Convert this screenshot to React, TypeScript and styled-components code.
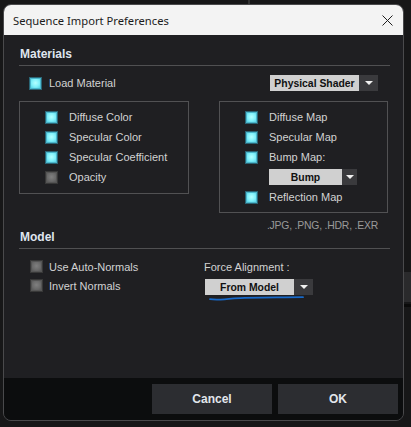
import React from "react";
import styled, { createGlobalStyle } from "styled-components";

const Global = createGlobalStyle`
  html, body { margin: 0; padding: 0; background: #161617; }
  * { box-sizing: border-box; }
`;

const Page = styled.div`
  width: 411px;
  height: 427px;
  padding: 4px 0 0 3px;
  background:
    linear-gradient(#2a2a2c, #2a2a2c) 404px 272px / 7px 30px no-repeat,
    linear-gradient(#0a0a0a, #0a0a0a) 404px 304px / 7px 3px no-repeat,
    linear-gradient(#333, #333) 248px 0 / 2px 4px no-repeat,
    #171718;
  overflow: hidden;
`;

const Window = styled.div`
  width: 401px;
  height: 417px;
  border: 1px solid #4a4a4c;
  border-radius: 8px;
  overflow: hidden;
  display: flex;
  flex-direction: column;
  background: #1f1f22;
  font-family: "Liberation Sans", Arial, sans-serif;
`;

const TitleBar = styled.div`
  height: 30px;
  flex: none;
  background: #f3f3f3;
  display: flex;
  align-items: center;
  justify-content: space-between;
  padding: 0 10px 0 9px;
  font-family: "Noto Sans", "Open Sans", sans-serif;
  font-size: 11.2px;
  color: #1b1b1b;
`;

const CloseX = styled.svg`
  width: 11px;
  height: 11px;
  margin-top: 1px;
`;

const Body = styled.div`
  flex: 1;
  padding: 0 13px 0 15px;
  display: flex;
  flex-direction: column;
`;

const Heading = styled.div<{ $mt: number }>`
  margin-top: ${(p) => p.$mt}px;
  height: 16px;
  line-height: 18px;
  font-size: 12px;
  font-weight: bold;
  color: #dfe5ee;
  padding-left: 1px;
`;

const Separator = styled.div`
  margin-top: 4px;
  height: 1px;
  background: #505052;
`;

const MaterialsGrid = styled.div`
  display: grid;
  grid-template-columns: 170px 169px;
  column-gap: 30px;
  align-items: start;
`;

const TopRow = styled.div<{ $right?: boolean }>`
  margin-top: 9px;
  height: 16px;
  display: flex;
  align-items: center;
  justify-content: ${(p) => (p.$right ? "flex-end" : "flex-start")};
  padding: ${(p) => (p.$right ? "0 10px 0 0" : "0 0 0 10px")};
`;

const GroupBox = styled.div<{ $h: number }>`
  margin-top: 10px;
  height: ${(p) => p.$h}px;
  border: 1px solid #515153;
  padding: 5px 0 0 25px;
  display: flex;
  flex-direction: column;
`;

const Row = styled.div<{ $h?: number }>`
  height: ${(p) => p.$h ?? 20}px;
  display: flex;
  align-items: center;
  gap: 11px;
`;

const Label = styled.span`
  font-size: 11px;
  color: #d2d2d2;
  white-space: nowrap;
`;

const Box = styled.span<{ $on: boolean }>`
  width: 13px;
  height: 13px;
  flex: none;
  border: 1px solid ${(p) => (p.$on ? "#2a6575" : "#383838")};
  background: ${(p) =>
    p.$on
      ? "radial-gradient(circle at 50% 45%, #b4ffff 0%, #82f2fb 45%, #3fc3dc 100%)"
      : "radial-gradient(circle at 50% 45%, #808080 0%, #6a6a6a 50%, #4c4c4c 100%)"};
  box-shadow: inset 0 0 0 1px ${(p) => (p.$on ? "#4bb7cc" : "#555")};
`;

const Select = styled.div<{ $w: number; $arrow: number }>`
  width: ${(p) => p.$w}px;
  height: 16px;
  display: grid;
  grid-template-columns: 1fr ${(p) => p.$arrow}px;
  flex: none;
`;

const SelectValue = styled.div`
  background: #d0d0d0;
  color: #111;
  font-size: 10.4px;
  font-weight: bold;
  display: flex;
  align-items: center;
  justify-content: center;
  white-space: nowrap;
`;

const SelectArrow = styled.div`
  background: #3a3a3d;
  display: flex;
  align-items: center;
  justify-content: center;
  &::after {
    content: "";
    border-left: 4px solid transparent;
    border-right: 4px solid transparent;
    border-top: 4px solid #f0f0f0;
  }
`;

const SubSelect = styled.div`
  margin: 2px 0 2px 24px;
`;

const Ext = styled.div`
  grid-column: 2;
  margin-top: 6px;
  height: 14px;
  line-height: 14px;
  text-align: right;
  padding-right: 10px;
  font-size: 10.4px;
  letter-spacing: -0.2px;
  color: #9a9a9a;
`;

const ModelGrid = styled.div`
  margin-top: 8px;
  display: grid;
  grid-template-columns: 185px 1fr;
`;

const ModelLeft = styled.div`
  display: flex;
  flex-direction: column;
  padding-left: 11px;
`;

const ModelLeftRow = styled(Row)`
  height: 19px;
  gap: 6px;
`;

const ModelRight = styled.div`
  display: flex;
  flex-direction: column;
`;

const ForceLabel = styled.div`
  height: 19px;
  display: flex;
  align-items: center;
  font-size: 11px;
  color: #d2d2d2;
`;

const Annotated = styled.div`
  position: relative;
  margin-top: 3px;
  margin-left: 1px;
  width: 108px;
`;

const Scribble = styled.svg`
  position: absolute;
  left: 3px;
  top: 15px;
  overflow: visible;
`;

const Footer = styled.div`
  height: 42px;
  flex: none;
  background: #0c0d0e;
  display: flex;
  align-items: center;
  justify-content: flex-end;
  gap: 6px;
  padding-right: 5px;
`;

const Button = styled.button`
  width: 120px;
  height: 30px;
  border: none;
  background: #2c2d31;
  color: #e2e6ec;
  font-family: "Liberation Sans", Arial, sans-serif;
  font-size: 12px;
  font-weight: bold;
  padding: 0;
`;

const Check = ({ on, label }: { on: boolean; label: string }) => (
  <Row>
    <Box $on={on} />
    <Label>{label}</Label>
  </Row>
);

const Dropdown = ({ w, arrow, value }: { w: number; arrow: number; value: string }) => (
  <Select $w={w} $arrow={arrow}>
    <SelectValue>{value}</SelectValue>
    <SelectArrow />
  </Select>
);

export default function App() {
  return (
    <Page>
      <Global />
      <Window>
        <TitleBar>
          <span>Sequence Import Preferences</span>
          <CloseX viewBox="0 0 11 11">
            <path d="M0.5 0.5 L10.5 10.5 M10.5 0.5 L0.5 10.5" stroke="#1f1f1f" strokeWidth="1" fill="none" />
          </CloseX>
        </TitleBar>
        <Body>
          <Heading $mt={10}>Materials</Heading>
          <Separator />
          <MaterialsGrid>
            <TopRow>
              <Row $h={16} style={{ gap: 7 }}>
                <Box $on />
                <Label>Load Material</Label>
              </Row>
            </TopRow>
            <TopRow $right>
              <Dropdown w={108} arrow={19} value="Physical Shader" />
            </TopRow>
            <GroupBox $h={93}>
              <Check on label="Diffuse Color" />
              <Check on label="Specular Color" />
              <Check on label="Specular Coefficient" />
              <Check on={false} label="Opacity" />
            </GroupBox>
            <GroupBox $h={112}>
              <Check on label="Diffuse Map" />
              <Check on label="Specular Map" />
              <Check on label="Bump Map:" />
              <SubSelect>
                <Dropdown w={88} arrow={15} value="Bump" />
              </SubSelect>
              <Check on label="Reflection Map" />
            </GroupBox>
            <Ext>.JPG, .PNG, .HDR, .EXR</Ext>
          </MaterialsGrid>
          <Heading $mt={-5}>Model</Heading>
          <Separator />
          <ModelGrid>
            <ModelLeft>
              <ModelLeftRow>
                <Box $on={false} />
                <Label>Use Auto-Normals</Label>
              </ModelLeftRow>
              <ModelLeftRow>
                <Box $on={false} />
                <Label>Invert Normals</Label>
              </ModelLeftRow>
            </ModelLeft>
            <ModelRight>
              <ForceLabel>Force Alignment :</ForceLabel>
              <Annotated>
                <Dropdown w={108} arrow={19} value="From Model" />
                <Scribble width="96" height="8" viewBox="0 0 96 8">
                  <path
                    d="M2 5.2 C 8 6.2, 16 5.6, 26 4.4 C 40 3.4, 60 3.6, 95 3.2"
                    stroke="#1769c9"
                    strokeWidth="1.8"
                    fill="none"
                    strokeLinecap="round"
                  />
                </Scribble>
              </Annotated>
            </ModelRight>
          </ModelGrid>
        </Body>
        <Footer>
          <Button>Cancel</Button>
          <Button>OK</Button>
        </Footer>
      </Window>
    </Page>
  );
}
